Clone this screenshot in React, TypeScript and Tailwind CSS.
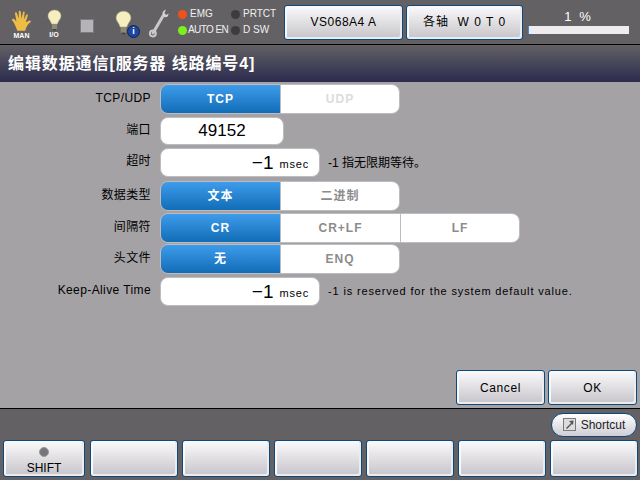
import React from 'react';

const FONT = "font-['Liberation_Sans','Noto_Sans_CJK_SC',sans-serif]";

const Hand = () => (
  <svg width="26" height="23" viewBox="0 0 28 24">
    <path
      d="M9 23 C7 18 6 15 3.500 12 C2.500 10.500 4 9.500 5.500 10.500 L8 13 L6.500 4.500 C6.300 3 8 2.700 8.500 4 L10.500 10 L10.500 2.500 C10.500 1 12.500 1 12.700 2.500 L13.500 10 L15 3 C15.300 1.700 17 2 16.900 3.500 L16 11 L18.500 6 C19.200 4.800 20.700 5.500 20.200 7 L18 14 L22 12 C23.500 11.500 24.200 13 23 14 C20.500 16 19 18 17.500 23 Z"
      fill="#eebd45"
    />
  </svg>
);

const Bulb = ({ w = 15, h = 22 }: { w?: number; h?: number }) => (
  <svg width={w} height={h} viewBox="0 0 15 22">
    <path d="M7.500 1 C3.500 1 1 3.800 1 7 C1 10 3.800 11.500 4.500 15 L10.500 15 C11.200 11.500 14 10 14 7 C14 3.800 11.500 1 7.500 1 Z" fill="#f5efc0" stroke="#a8a688" strokeWidth="0.5" />
    <rect x="5" y="15" width="5" height="5" fill="#8c8b78" />
    <rect x="6" y="20" width="3" height="1.500" fill="#45443f" />
  </svg>
);

const Wrench = () => (
  <svg width="20" height="30" viewBox="0 0 20 30">
    <path d="M4 25 L14 8" stroke="#c9c9cb" strokeWidth="3" strokeLinecap="round" />
    <path d="M14 8 C12.500 5 14 2.500 17 1.500 L15.500 5 L17 7 L19.500 5.500 C19.500 9 17 10.500 14 8 Z" fill="#d2d2d4" />
    <circle cx="3.800" cy="25.500" r="3" fill="none" stroke="#c9c9cb" strokeWidth="2" />
  </svg>
);

const LedLabel = ({ color, text, tight }: { color: string; text: string; tight?: boolean }) => (
  <div className="flex items-center h-[16px] whitespace-nowrap">
    <span className={`w-[9px] h-[9px] rounded-full shrink-0 ${color}`} />
    <span className={`text-[10px] leading-none text-[#f0f0f0] ${tight ? 'pl-[1px] tracking-[-0.6px]' : 'pl-[3px]'}`}>{text}</span>
  </div>
);

const RaisedButton = ({ className = '', children }: { className?: string; children?: React.ReactNode }) => (
  <div
    className={`flex flex-col items-center justify-center rounded-[3px] border border-[#0a4a80] bg-gradient-to-b from-[#fbfafb] to-[#c6c4c9] shadow-[inset_-2px_-2px_0_#ecebee,inset_2px_2px_0_#f8f8f8] text-black whitespace-pre ${className}`}
  >
    {children}
  </div>
);

const Segment = ({ label, active, muted, className = 'w-[120px]' }: { label: string; active?: boolean; muted?: boolean; className?: string }) => (
  <div
    className={`flex items-center justify-center text-[12px] font-bold tracking-[1px] ${className} ${
      active ? 'bg-gradient-to-b from-[#3d9ceb] to-[#0f6db6] text-white' : muted ? 'bg-white text-[#dcdcdc]' : 'bg-white text-[#8c8c8c]'
    }`}
  >
    {label}
  </div>
);

const Segments = ({ children }: { children: React.ReactNode }) => (
  <div className="flex h-[30px] rounded-[8px] overflow-hidden border border-[#bdbcc0] divide-x divide-[#bdbcc0]">{children}</div>
);

const Row = ({ label, children, className = '' }: { label: string; children: React.ReactNode; className?: string }) => (
  <div className={`flex items-center ${className}`}>
    <div className="w-[151px] pb-[3px] text-right text-[12px] tracking-[0.4px] text-black shrink-0">{label}</div>
    <div className="ml-[9px] flex items-center">{children}</div>
  </div>
);

const Msec = () => (
  <div className="flex items-center justify-end w-[160px] h-[29px] pr-[10px] rounded-[8px] bg-white border border-[#bdbcc0] text-black">
    <span className="text-[19px] leading-none">−1</span>
    <span className="ml-[6px] text-[11px] tracking-[0.8px] leading-none pt-[3px]">msec</span>
  </div>
);

export default function App() {
  return (
    <div className={`w-[640px] h-[480px] overflow-hidden flex flex-col bg-[#a4a2a5] ${FONT}`}>
      {/* status bar */}
      <div className="h-[45px] shrink-0 flex items-center bg-[#636163] border-b border-black">
        <div className="w-[42px] flex flex-col items-center pl-[1px] pt-[4px]">
          <Hand />
          <span className="text-[7px] leading-[8px] font-bold text-white">MAN</span>
        </div>
        <div className="w-[24px] flex flex-col items-center pt-[4px]">
          <Bulb />
          <span className="text-[7px] leading-[8px] font-bold text-white">I/O</span>
        </div>
        <div className="ml-[14px] w-[14px] h-[14px] mt-[8px] bg-[#b5b3b8] border border-[#7c7b7e]" />
        <div className="ml-[21px] relative w-[26px] h-[32px] pt-[4px]">
          <Bulb w={17} h={25} />
          <span className="absolute left-[12px] top-[19px] w-[13px] h-[13px] rounded-full bg-[#1c46a0] border border-[#0c2258] flex items-center justify-center text-[9px] font-bold leading-none text-white">
            i
          </span>
        </div>
        <div className="ml-[8px] pt-[2px]">
          <Wrench />
        </div>
        <div className="ml-[9px] w-[53px] flex flex-col">
          <LedLabel color="bg-[#f0501c]" text="EMG" />
          <LedLabel color="bg-[#7cf01c]" text="AUTO EN" tight />
        </div>
        <div className="w-[51px] flex flex-col">
          <LedLabel color="bg-[#3c3c3e]" text="PRTCT" />
          <LedLabel color="bg-[#3c3c3e]" text="D SW" />
        </div>
        <RaisedButton className="ml-[2px] w-[119px] h-[35px] text-[12px] tracking-[0.5px]">VS068A4 A</RaisedButton>
        <RaisedButton className="ml-[3px] w-[117px] h-[35px] text-[12px] tracking-[1px]">各轴  W 0 T 0</RaisedButton>
        <div className="ml-[5px] w-[101px] flex flex-col items-center">
          <span className="text-[13px] leading-[14px] tracking-[2px] text-white pb-[2px]">1 %</span>
          <div className="w-full h-[8px] bg-[#efecef] flex">
            <div className="w-[1px] h-full bg-[#3d8fdc]" />
          </div>
        </div>
      </div>

      {/* title */}
      <div className="h-[37px] shrink-0 flex items-center pl-[8px] bg-gradient-to-b from-[#636163] to-[#2d2b4e] text-white text-[16px] tracking-[0.9px] font-bold">
        编辑数据通信[服务器 线路编号4]
      </div>

      {/* form */}
      <div className="flex-1 flex flex-col pt-[2px] bg-[#a4a2a5]">
        <Row label="TCP/UDP">
          <Segments>
            <Segment label="TCP" active />
            <Segment label="UDP" muted className="w-[118px]" />
          </Segments>
        </Row>
        <Row label="端口" className="mt-[3px]">
          <div className="flex items-center justify-center w-[124px] h-[28px] rounded-[8px] bg-white border border-[#bdbcc0] text-[17px] text-black">
            49152
          </div>
        </Row>
        <Row label="超时" className="mt-[3px]">
          <Msec />
          <span className="ml-[8px] text-[12px] text-black">-1 指无限期等待。</span>
        </Row>
        <Row label="数据类型" className="mt-[4px]">
          <Segments>
            <Segment label="文本" active />
            <Segment label="二进制" className="w-[118px]" />
          </Segments>
        </Row>
        <Row label="间隔符" className="mt-[2px]">
          <Segments>
            <Segment label="CR" active />
            <Segment label="CR+LF" />
            <Segment label="LF" className="w-[118px]" />
          </Segments>
        </Row>
        <Row label="头文件" className="mt-[1px]">
          <Segments>
            <Segment label="无" active />
            <Segment label="ENQ" className="w-[118px]" />
          </Segments>
        </Row>
        <Row label="Keep-Alive Time" className="mt-[3px]">
          <Msec />
          <span className="ml-[8px] text-[11px] tracking-[0.85px] text-black">-1 is reserved for the system default value.</span>
        </Row>
        <div className="mt-auto pb-[3px] pr-[3px] flex justify-end gap-[3px]">
          <RaisedButton className="w-[89px] h-[35px] text-[12px] tracking-[0.6px]">Cancel</RaisedButton>
          <RaisedButton className="w-[89px] h-[35px] text-[12px] tracking-[0.6px]">OK</RaisedButton>
        </div>
      </div>

      {/* function keys */}
      <div className="h-[72px] shrink-0 flex flex-col bg-[#636163] border-t border-black">
        <div className="h-[31px] flex items-center justify-end pr-[3px]">
          <div className="flex items-center justify-center gap-[5px] w-[86px] h-[24px] rounded-full bg-gradient-to-b from-[#ffffff] to-[#cfcdd6] border border-[#0a4a80] text-[12px] text-[#222]">
            <svg width="13" height="13" viewBox="0 0 13 13">
              <rect x="0.500" y="0.500" width="12" height="12" fill="#dcdcdc" stroke="#7a7a7a" />
              <path d="M3 10 L8 5 L6 3 L10.500 2.500 L10 7 L9 6 L4 11 Z" fill="#555" />
            </svg>
            Shortcut
          </div>
        </div>
        <div className="h-[38px] flex pl-[3px] gap-[4px]">
          <RaisedButton className="w-[82px] h-[37px] mr-[1px] text-[12px] gap-[4px] pt-[4px]">
            <span className="w-[10px] h-[10px] rounded-full bg-[#77767a] border border-[#9a999c]" />
            <span className="leading-[14px]">SHIFT</span>
          </RaisedButton>
          {[0, 1, 2, 3, 4, 5].map((i) => (
            <RaisedButton key={i} className="w-[88px] h-[37px]" />
          ))}
        </div>
      </div>
    </div>
  );
}
